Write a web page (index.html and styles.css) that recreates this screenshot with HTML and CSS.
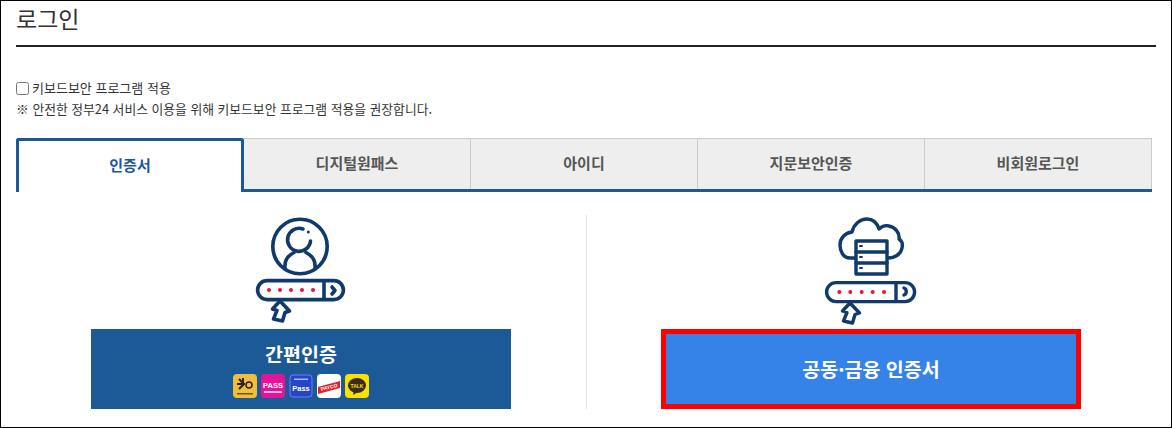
FILE: index.html
```html
<!DOCTYPE html>
<html lang="ko">
<head>
    <meta charset="UTF-8">
    <meta name="viewport" content="width=device-width, initial-scale=1.0">
    <title>로그인</title>
    <link rel="stylesheet" href="styles.css">
</head>
<body>

<div class="page">
    <h1 class="title">로그인</h1>

    <div class="keyboard">
        <label class="check"><input type="checkbox"> 키보드보안 프로그램 적용</label>
        <p class="note">※ 안전한 정부24 서비스 이용을 위해 키보드보안 프로그램 적용을 권장합니다.</p>
    </div>

    <div class="tabs">
        <div class="tab active">인증서</div>
        <div class="tab">디지털원패스</div>
        <div class="tab">아이디</div>
        <div class="tab">지문보안인증</div>
        <div class="tab">비회원로그인</div>
    </div>

    <div class="panel">
        <div class="col">
            <svg class="icon" viewBox="0 0 100 110" width="100" height="110">
                <g fill="none" stroke="#0f3a6b" stroke-width="3.6" stroke-linecap="round" stroke-linejoin="round">
                    <circle cx="49" cy="29.5" r="27.2"/>
                    <path d="M52 12A11.5 11.5 0 1 0 59.5 24"/>
                    <path d="M34 51C33 42 38 38 43 35.5M55 35.5C60 38 65 42 64 51"/>
                    <rect x="6.6" y="63.6" width="85.8" height="19" rx="9.5"/>
                    <path d="M73 64v18"/>
                    <path d="M81 70l3 3.5-3 3.5"/>
                    <path d="M29 84L21.5 92 26 93.5 22.5 102 31.5 104 34 95.5 38.5 94z" fill="#fff"/>
                </g>
                <circle cx="57.3" cy="15" r="1.5" fill="#0f3a6b"/>
                <g fill="#f0103c">
                    <circle cx="18" cy="73" r="2"/><circle cx="29" cy="73" r="2"/><circle cx="40" cy="73" r="2"/><circle cx="51" cy="73" r="2"/><circle cx="62" cy="73" r="2"/>
                </g>
            </svg>
            <button class="btn btn-easy">
                <span class="btn-label">간편인증</span>
                <span class="apps">
                    <svg class="app" viewBox="0 0 24 24"><rect width="24" height="24" rx="4" fill="#f2bd38"/><path d="M6 5l5 5M10 4v8M4 10h8M6 15l5-5" stroke="#2b2412" stroke-width="2"/><circle cx="16" cy="11" r="3" fill="none" stroke="#2b2412" stroke-width="1.5"/><rect x="4" y="19" width="16" height="1.5" fill="#6b5618"/></svg>
                    <svg class="app" viewBox="0 0 24 24"><rect width="24" height="24" rx="4" fill="#e5129a"/><text x="12" y="13.5" class="app-text" fill="#fff">PASS</text><rect x="3" y="17" width="18" height="2" fill="#f9b4de"/></svg>
                    <svg class="app" viewBox="0 0 24 24"><rect width="24" height="24" rx="4" fill="#2446c8"/><rect x="1" y="1" width="22" height="22" rx="3" fill="none" stroke="#8ea2ea" stroke-width=".7"/><rect x="5" y="4.5" width="14" height="1.5" fill="#a9b8ee"/><text x="12" y="16.5" class="app-text" fill="#fff">Pass</text></svg>
                    <svg class="app" viewBox="0 0 24 24"><rect width="24" height="24" rx="4" fill="#fff"/><path d="M1 13L23 7v7L1 20z" fill="#e2202c"/><text x="12" y="15" class="app-text small" fill="#fff" transform="rotate(-14 12 13)">PAYCO</text></svg>
                    <svg class="app" viewBox="0 0 24 24"><rect width="24" height="24" rx="4" fill="#fae100"/><ellipse cx="12" cy="11.5" rx="9" ry="7.5" fill="#3a2a20"/><path d="M9 17l-1 4 5-3z" fill="#3a2a20"/><text x="12" y="13.5" class="app-text small" fill="#fae100">TALK</text></svg>
                </span>
            </button>
        </div>
        <div class="col col-right">
            <svg class="icon" viewBox="0 0 100 110" width="100" height="110">
                <g fill="none" stroke="#0f3a6b" stroke-width="3.4" stroke-linecap="round" stroke-linejoin="round">
                    <path d="M34 41H29C22 41 19 34 19 28C19 21 24 16 31 15C33 7 39 2 46 2C52 2 56 6 58 12C61 9 64 8 68 9C74 10 79 16 78 22C81 24 82 27 81 31C80 37 74 41 67 41"/>
                    <rect x="35" y="24" width="31" height="33" fill="#fff"/>
                    <path d="M35 35h31M35 46h31"/>
                    <path d="M39 29h2M39 40h2M39 51h2" stroke-width="2"/>
                    <rect x="5.6" y="65.6" width="88" height="19" rx="9.5"/>
                    <path d="M75 66v18"/>
                    <path d="M83 71c3 1 3 6 0 7"/>
                    <path d="M29 86L21.500 94 26 95.5 22.5 104 31.500 106 34 97.5 38.5 96z" fill="#fff"/>
                </g>
                <g fill="#f0103c">
                    <circle cx="18.3" cy="75" r="2"/><circle cx="29.3" cy="75" r="2"/><circle cx="40.7" cy="75" r="2"/><circle cx="51.7" cy="75" r="2"/><circle cx="63" cy="75" r="2"/>
                </g>
            </svg>
            <button class="btn btn-cert">공동·금융 인증서</button>
        </div>
    </div>
</div>

</body>
</html>
```

FILE: styles.css
```css
* {
    box-sizing: border-box;
}
body {
    font-family: "Noto Sans CJK KR", "Noto Sans", sans-serif;
    margin: 0;
    padding: 0;
    background-color: #fff;
    color: #333;
}
.page {
    width: 1172px;
    height: 428px;
    padding: 0 15px 0 14px;
    border: 1px solid #000;
    overflow: hidden;
    background-color: #fff;
}
.title {
    margin: 0 0 0 1px;
    height: 46px;
    padding-top: 3px;
    font-size: 23px;
    line-height: 28px;
    font-weight: 400;
    color: #333;
    border-bottom: 2px solid #222;
    width: 1140px;
}
.keyboard {
    margin: 31px 0 0 1px;
    height: 60px;
}
.check {
    display: flex;
    align-items: center;
    gap: 3px;
    font-size: 13px;
    line-height: 20px;
}
.check input {
    width: 13px;
    height: 13px;
    margin: 0;
}
.note {
    margin: 1px 0 0;
    font-size: 12.8px;
    line-height: 20px;
}
.tabs {
    display: flex;
    width: 1136px;
    height: 54px;
    margin-left: 1px;
    border-bottom: 3px solid #1b5a96;
}
.tab {
    width: 227px;
    height: 51px;
    padding-bottom: 3px;
    display: flex;
    align-items: center;
    justify-content: center;
    font-size: 15px;
    font-weight: 700;
    color: #555;
    background-color: #eee;
    border-top: 1px solid #ccc;
    border-right: 1px solid #ccc;
}
.tab.active {
    width: 228px;
    height: 54px;
    padding-bottom: 5px;
    color: #1b5a96;
    background-color: #fff;
    border: 3px solid #1b5a96;
    border-bottom: none;
    border-radius: 3px 3px 0 0;
}
.panel {
    display: flex;
    margin-left: 1px;
    width: 1140px;
    padding-top: 23px;
}
.col {
    width: 570px;
    height: 194px;
    display: flex;
    flex-direction: column;
    align-items: center;
}
.col-right {
    border-left: 1px solid #e4e4e4;
    padding-right: 1px;
}
.icon {
    display: block;
    margin-top: 2px;
    height: 110px;
}
.btn {
    width: 420px;
    height: 80px;
    margin-top: 2px;
    border: none;
    color: #fff;
    font-family: inherit;
    font-weight: 700;
    font-size: 19.5px;
}
.btn-easy {
    display: flex;
    flex-direction: column;
    align-items: center;
    justify-content: flex-start;
    background-color: #1b5a96;
    padding: 11px 0 0;
}
.btn-label {
    line-height: 28px;
}
.apps {
    display: flex;
    gap: 4px;
    margin-top: 6px;
}
.app {
    width: 24px;
    height: 24px;
    display: block;
}
.app-text {
    font-family: "Liberation Sans", sans-serif;
    font-size: 7.5px;
    font-weight: 700;
    text-anchor: middle;
}
.app-text.small {
    font-size: 5px;
}
.btn-cert {
    background-color: #3582e8;
    border: 5px solid #f00;
    padding: 0 0 2px;
}
```
